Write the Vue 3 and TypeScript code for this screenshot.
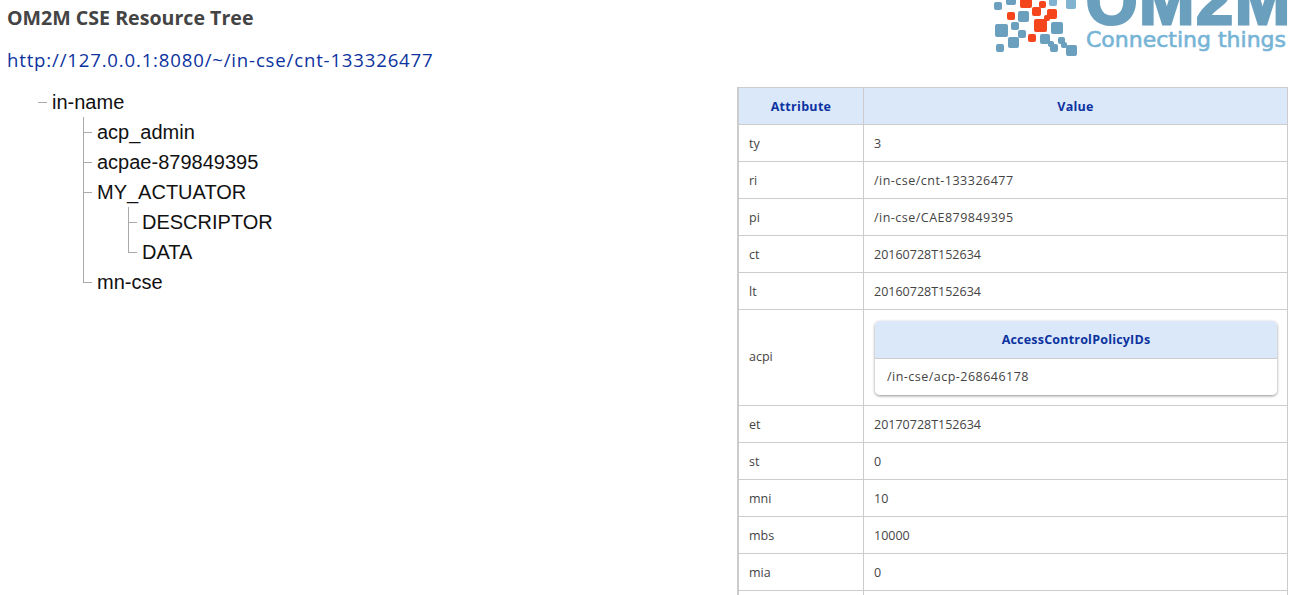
<script setup lang="ts">
interface Row { k: string; v: string; nested?: boolean }
const rows: Row[] = [
  { k: 'ty', v: '3' },
  { k: 'ri', v: '/in-cse/cnt-133326477' },
  { k: 'pi', v: '/in-cse/CAE879849395' },
  { k: 'ct', v: '20160728T152634' },
  { k: 'lt', v: '20160728T152634' },
  { k: 'acpi', v: '/in-cse/acp-268646178', nested: true },
  { k: 'et', v: '20170728T152634' },
  { k: 'st', v: '0' },
  { k: 'mni', v: '10' },
  { k: 'mbs', v: '10000' },
  { k: 'mia', v: '0' },
  { k: '', v: '' },
]
const B = '#6a9fbd'
const R = '#f5451c'
const squares: [number, number, number, string][] = [
  [994, 2, 8, B], [1006, -5, 10, B], [1020, -4, 12, R], [1039, 1, 7, R],
  [1032, 7, 9, R], [1047, 9, 10, R], [1007, 12, 8, R], [1018, 11, 11, B],
  [1049, -2, 8, '#7fb3cf'], [1066, -1, 10, '#7fb3cf'], [1034, 19, 13, R], [1051, 22, 12, B],
  [995, 24, 13, B], [1011, 22, 8, B], [1018, 30, 8, B], [1008, 37, 11, B],
  [1028, 34, 8, R], [1040, 34, 10, B], [1058, 37, 7, B], [1050, 44, 8, B],
  [1066, 45, 11, B], [996, 44, 8, B], [1044, 15, 6, R], [1048, 41, 6, B], [1061, 42, 6, B],
]
</script>

<template>
  <div class="page">
    <svg class="mosaic" viewBox="990 0 90 60" width="90" height="60" aria-hidden="true">
      <rect v-for="(s, i) in squares" :key="i" :x="s[0]" :y="s[1]" :width="s[2]" :height="s[2]" rx="2" :fill="s[3]" />
    </svg>
    <div class="logo">
      <div class="logo-mark">OM2M</div>
      <div class="logo-tag">Connecting things</div>
    </div>
    <h1 class="title">OM2M CSE Resource Tree</h1>
    <div class="url">http://127.0.0.1:8080/~/in-cse/cnt-133326477</div>

    <div class="main">
      <ul class="tree root">
        <li class="last">in-name
          <ul class="tree">
            <li>acp_admin</li>
            <li>acpae-879849395</li>
            <li>MY_ACTUATOR
              <ul class="tree">
                <li>DESCRIPTOR</li>
                <li class="last">DATA</li>
              </ul>
            </li>
            <li class="last">mn-cse</li>
          </ul>
        </li>
      </ul>

      <table class="attrs">
        <thead>
          <tr><th class="c1">Attribute</th><th>Value</th></tr>
        </thead>
        <tbody>
          <tr v-for="(r, i) in rows" :key="i">
            <td class="c1" :class="{ 'nest-key': r.nested }">{{ r.k }}</td>
            <td v-if="!r.nested" :class="{ path: r.v.startsWith('/') }">{{ r.v }}</td>
            <td v-else class="nest">
              <div class="card">
                <div class="card-h">AccessControlPolicyIDs</div>
                <div class="card-b path">{{ r.v }}</div>
              </div>
            </td>
          </tr>
        </tbody>
      </table>
    </div>
  </div>
</template>

<style>
html, body { margin: 0; background: #fff; overflow: hidden; }
</style>

<style scoped>
.page {
  position: relative;
  width: 1312px;
  height: 595px;
  overflow: hidden;
  font-family: "Open Sans", "DejaVu Sans", sans-serif;
}
.mosaic { position: absolute; left: 990px; top: 0; }
.logo { position: absolute; left: 1086px; top: -28px; width: 210px; }
.logo-mark {
  font: 900 66px/58px "Liberation Sans", sans-serif;
  color: #6a9fbd;
  -webkit-text-stroke: 3px #6a9fbd;
  letter-spacing: 2px;
  height: 58px;
}
.logo-tag {
  font: 400 22px/20px "DejaVu Sans", sans-serif;
  color: #76b4d6;
  -webkit-text-stroke: .6px #76b4d6;
  white-space: nowrap;
}
.title {
  margin: 0;
  padding: 7px 0 0 7px;
  font: 700 19.6px/22px "Open Sans", sans-serif;
  color: #444;
}
.url {
  padding: 19px 0 0 7px;
  font: 400 18.6px/24px "Open Sans", sans-serif;
  letter-spacing: .82px;
  color: #0c33a0;
}
.main { display: flex; align-items: flex-start; justify-content: space-between; padding: 15px 24px 0 0; }
.tree { list-style: none; margin: 0; padding: 0 0 0 45px; font: 20px/30px "Liberation Sans", sans-serif; color: #111; }
.root { padding-left: 52px; }
.tree li { position: relative; }
.tree li::before {
  content: "";
  position: absolute;
  left: -14px;
  top: 0;
  bottom: 0;
  border-left: 1px solid #aaa;
}
.tree li.last::before { bottom: auto; height: 16px; }
.tree li::after {
  content: "";
  position: absolute;
  left: -14px;
  top: 15px;
  width: 9px;
  border-top: 1px solid #aaa;
}
.root > li::before { border-left: 0; }
.attrs {
  width: 551px;
  border-collapse: collapse;
  table-layout: fixed;
  font: 12.5px/16px "Open Sans", sans-serif;
  color: #444;
  border-left: 2px solid #ccc;
  border-top: 1px solid #ccc;
}
.attrs th, .attrs td { border: 1px solid #ccc; padding: 11px 10px 9px; height: 16px; text-align: left; font-weight: 400; }
.attrs th { background: #dae8fa; color: #0c33a0; font-weight: 700; text-align: center; letter-spacing: .3px; }
.attrs .c1 { width: 104px; }
.attrs .nest-key { padding: 9px 10px 11px; }
.attrs .path { letter-spacing: .48px; }
.attrs .nest { padding: 11px 10px 10px 11px; }
.card { border-radius: 5px; box-shadow: 0 1px 3px rgba(0,0,0,.45); overflow: hidden; }
.card-h { background: #dae8fa; color: #0c33a0; font-weight: 700; text-align: center; letter-spacing: .2px; padding: 11px 10px 10px; border-bottom: 1px solid #ccc; }
.card-b { padding: 10px 12px; background: #fff; }
</style>
